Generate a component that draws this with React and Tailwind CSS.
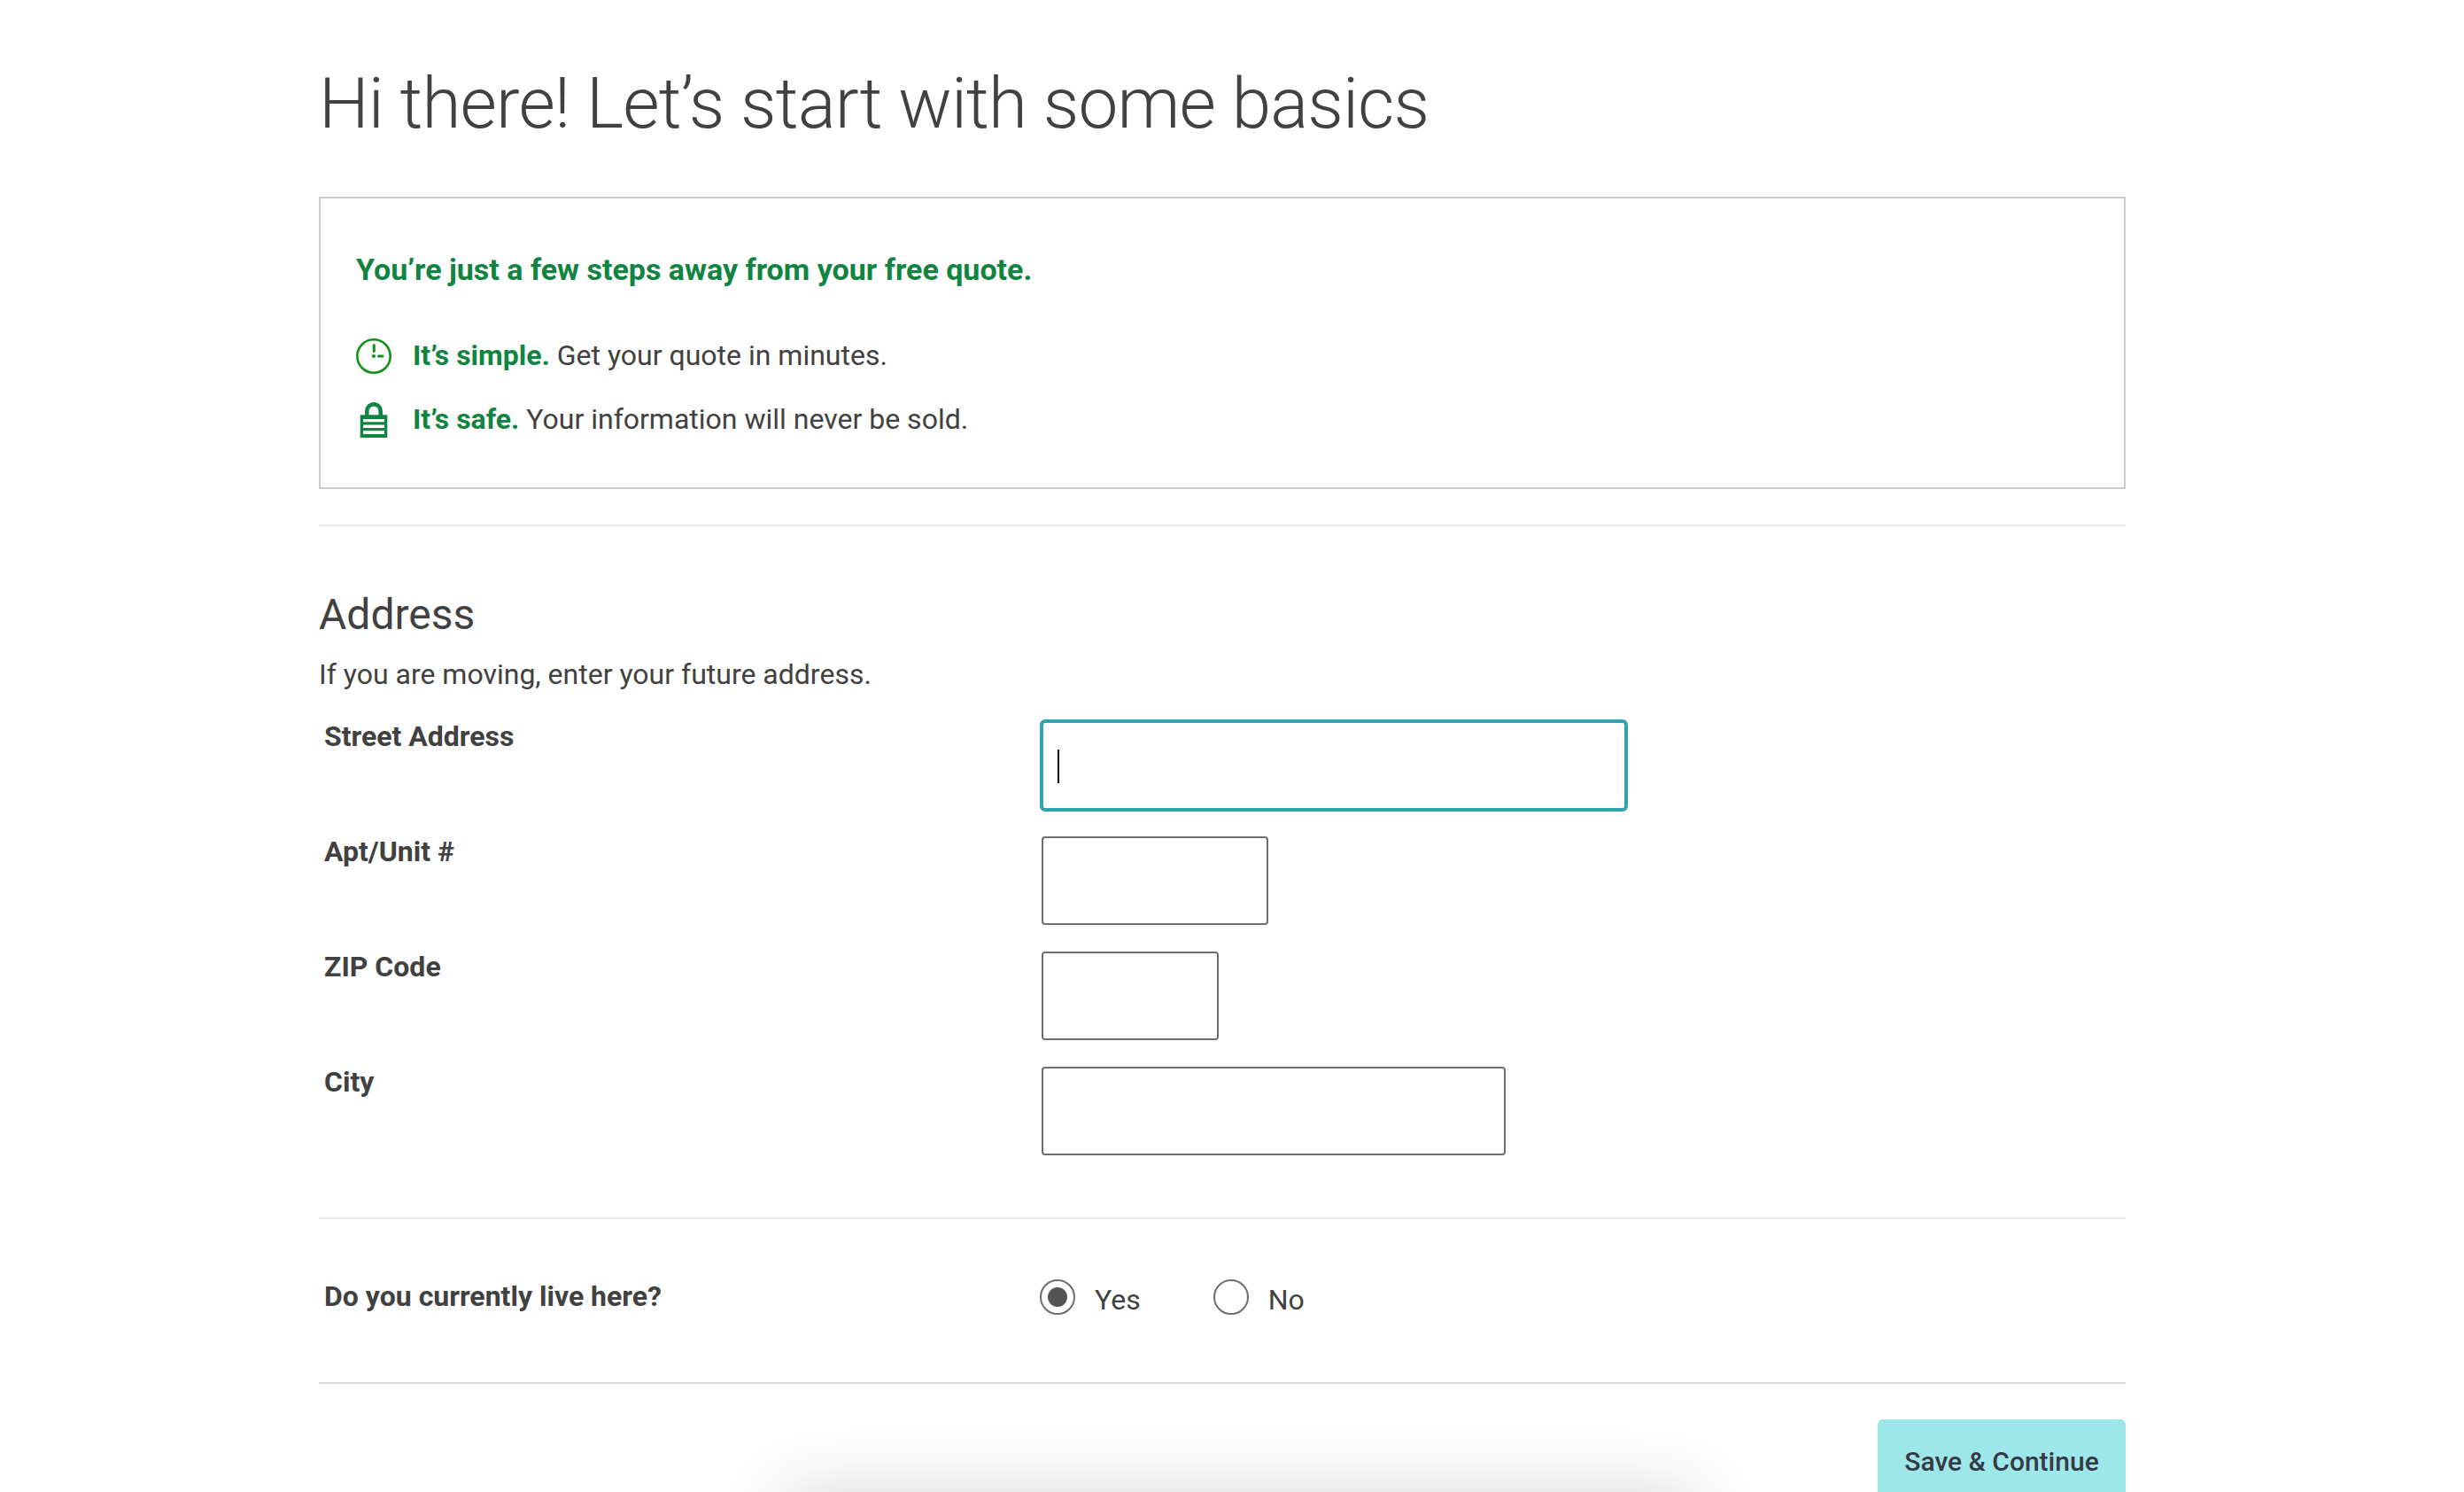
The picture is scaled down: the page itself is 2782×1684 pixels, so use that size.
const FIELDS = [
  { id: 'street', label: 'Street Address', width: 'w-[664px]', active: true },
  { id: 'apt', label: 'Apt/Unit #', width: 'w-64' },
  { id: 'zip', label: 'ZIP Code', width: 'w-[200px]' },
  { id: 'city', label: 'City', width: 'w-[524px]' },
]

function ClockIcon() {
  return (
    <svg className="h-10 w-10" viewBox="0 0 40 40" fill="none" stroke="#149119" aria-hidden>
      <circle cx="20" cy="20" r="18.7" strokeWidth="2.6" />
      <path d="M20.3 7.5v7M25.500 20h4.500" strokeWidth="3" strokeLinecap="round" />
      <circle cx="20" cy="20" r="2.1" fill="#149119" stroke="none" />
    </svg>
  )
}

function LockIcon() {
  return (
    <svg className="h-10 w-10" viewBox="0 0 40 40" fill="none" aria-hidden>
      <path d="M12.300 16V9.900a7.700 7.700 0 0 1 15.400 0V16" stroke="#118442" strokeWidth="4.500" />
      <path d="M4.700 14.300h30.600V40H4.700z" fill="#118442" />
      <path d="M8 19h24v3.200H8zM8 25.500h24v3.500H8zM8 32.300h24v3.700H8z" fill="#fefefe" />
    </svg>
  )
}

function Benefit({ icon, title, children }) {
  return (
    <li className="flex h-[72px] items-center">
      {icon}
      <p className="-mt-0.5 ml-6 text-[32px] leading-[40px]">
        <strong className="font-bold text-[#118442]">{title}</strong> {children}
      </p>
    </li>
  )
}

function Field({ id, label, width, active }) {
  return (
    <div className="flex h-[130px] items-start">
      <label htmlFor={id} className="-mt-px w-[808px] shrink-0 pl-1.5 text-[32px] leading-[40px] font-bold">
        {label}
      </label>
      {active ? (
        <div className={`relative ml-1.5 ${width}`}>
          <input id={id} className="block h-[104px] w-full rounded-md border-4 border-[#31a4af] outline-none" />
          <span className="absolute top-[34px] left-5 h-[38px] w-0.5 bg-black" />
        </div>
      ) : (
        <input id={id} className={`mt-0.5 ml-2 block h-[100px] rounded border-2 border-[#6e6e6e] outline-none ${width}`} />
      )}
    </div>
  )
}

function Radio({ label, checked }) {
  return (
    <div className="flex items-start" role="radio" aria-checked={!!checked}>
      <span className="flex h-10 w-10 items-center justify-center rounded-full border-2 border-[#6e6e6e]">
        {checked && <span className="h-[22px] w-[22px] rounded-full bg-[#545454]" />}
      </span>
      <span className="mt-[3px] ml-[22px] text-[32px] leading-[40px]">{label}</span>
    </div>
  )
}

export default function App() {
  return (
    <div className="relative h-[1684px] w-full overflow-hidden bg-[#fefefe] font-[Roboto,sans-serif] text-[#414141]">
      {/* soft shadow of the panel sitting just below the fold */}
      <div className="absolute top-[1692px] left-[892px] h-[200px] w-[1016px] shadow-[0_0_80px_rgba(0,0,0,0.19)]" />

      <main className="ml-[360px] flex w-[2040px] flex-col">
        <h1 className="mt-[69px] text-[80px] leading-[96px] font-light tracking-[-0.84px]">
          Hi there! Let’s start with some basics
        </h1>

        <section className="mt-[57px] h-[330px] border-2 border-[#cbcbcb] px-10 pt-[60px]">
          <h2 className="text-[34px] leading-[40px] font-bold text-[#118442]">
            You’re just a few steps away from your free quote.
          </h2>
          <ul className="mt-[42px]">
            <Benefit icon={<ClockIcon />} title="It’s simple.">
              Get your quote in minutes.
            </Benefit>
            <Benefit icon={<LockIcon />} title="It’s safe.">
              Your information will never be sold.
            </Benefit>
          </ul>
        </section>

        <form className="mt-10 border-t-2 border-[#e8e8e8]">
          <h2 className="mt-[72px] text-[48px] leading-[56px]">Address</h2>
          <p className="mt-[19px] text-[32px] leading-[40px]">If you are moving, enter your future address.</p>

          <div className="mt-[31px]">
            {FIELDS.map((field) => (
              <Field key={field.id} {...field} />
            ))}
          </div>

          <div className="mt-[42px] flex h-[188px] items-start border-y-2 border-t-[#e8e8e8] border-b-[#d8d8d8] pt-[68px]">
            <p className="mt-[-1px] w-[814px] pl-1.5 text-[32px] leading-[40px] font-bold">Do you currently live here?</p>
            <div className="flex gap-[82px]" role="radiogroup">
              <Radio label="Yes" checked />
              <Radio label="No" />
            </div>
          </div>

          <div className="mt-10 flex justify-end">
            <button
              type="button"
              className="h-24 w-[280px] rounded-md bg-[#9de6e9] text-[30px] leading-[40px] font-medium text-[#353a45]"
            >
              Save &amp; Continue
            </button>
          </div>
        </form>
      </main>
    </div>
  )
}
